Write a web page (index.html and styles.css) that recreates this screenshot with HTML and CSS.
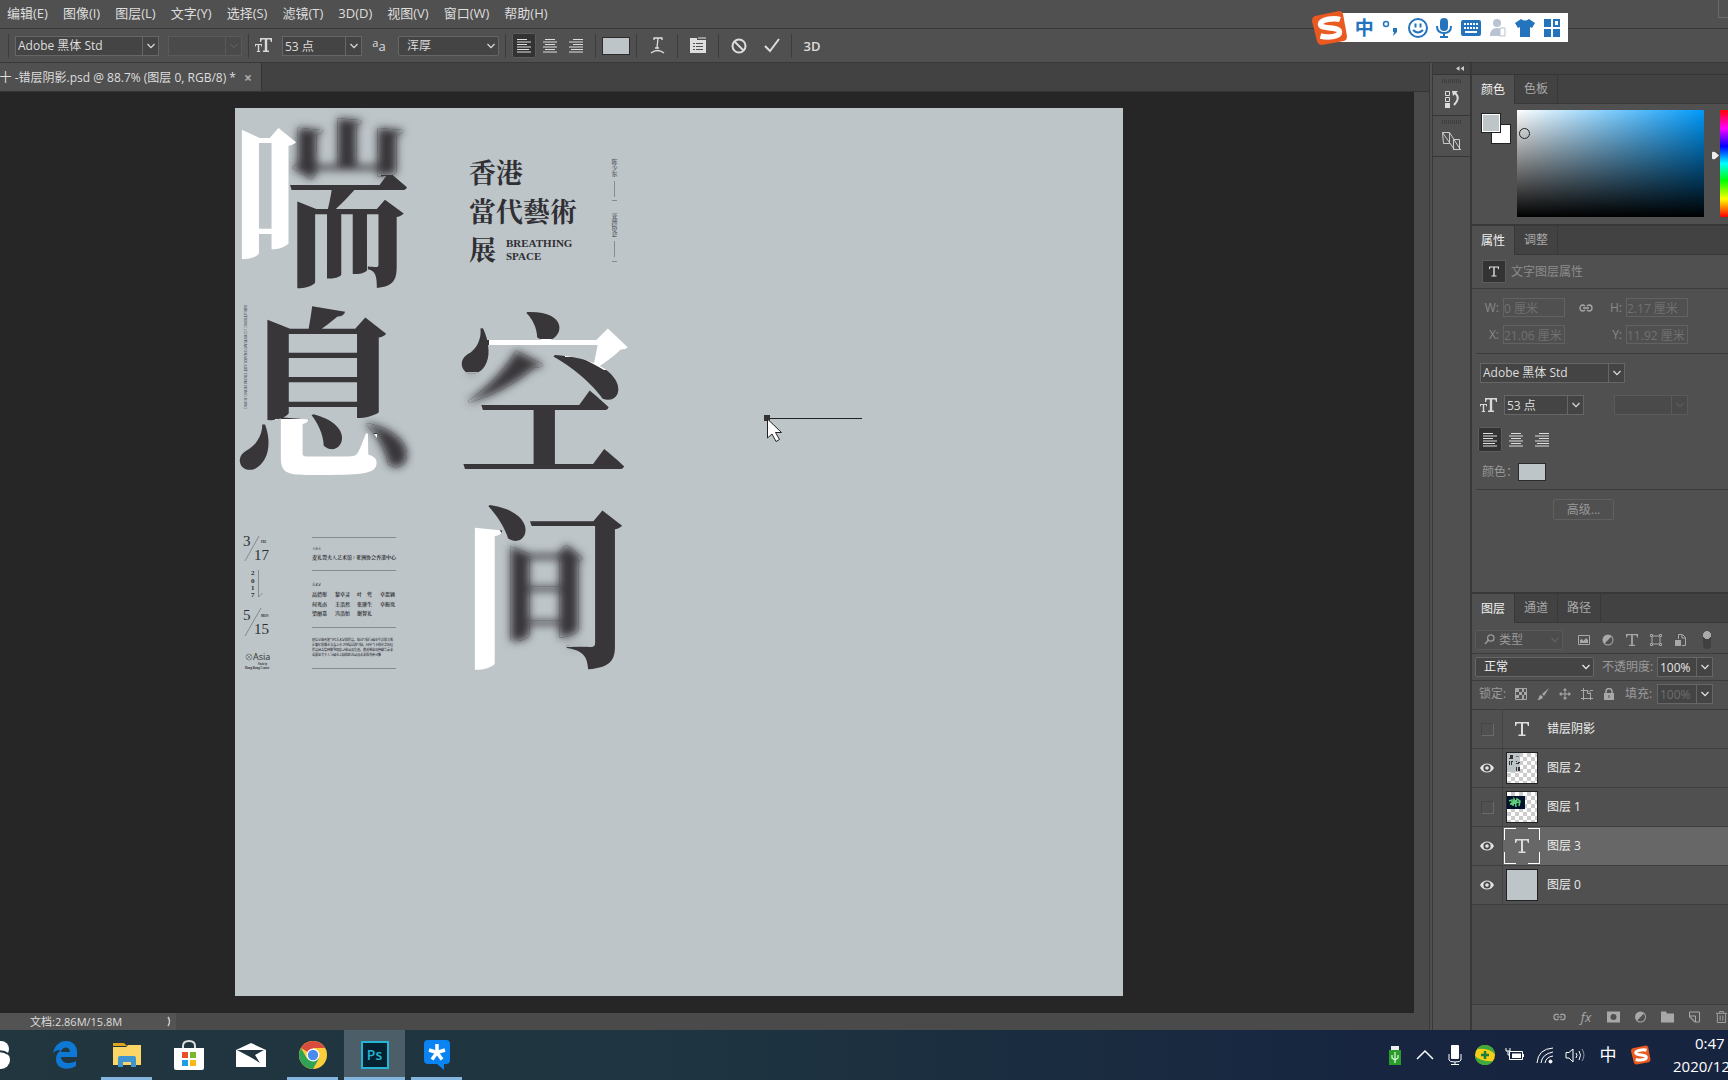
FILE: index.html
```html
<!DOCTYPE html>
<html lang="zh-CN">
<head>
<meta charset="utf-8">
<title>错层阴影.psd</title>
<link rel="stylesheet" href="styles.css">
</head>
<body>
<svg class="defs" aria-hidden="true">
  <symbol id="chev" viewBox="0 0 8 6"><path d="M0.5 1 4 4.7 7.500 1" fill="none" stroke="currentColor" stroke-width="1.200"/></symbol>
  <symbol id="al" viewBox="0 0 14 14"><path d="M0 .5h10M0 3h14M0 5.500h10M0 8h14M0 10.500h12M0 13h14" stroke="currentColor"/></symbol>
  <symbol id="ac" viewBox="0 0 14 14"><path d="M2 .5h10M0 3h14M2 5.500h10M0 8h14M2 10.500h10M0 13h14" stroke="currentColor"/></symbol>
  <symbol id="ar" viewBox="0 0 14 14"><path d="M4 .5h10M0 3h14M4 5.500h10M0 8h14M2 10.500h12M0 13h14" stroke="currentColor"/></symbol>
  <symbol id="tt" viewBox="0 0 17 15"><path d="M5 0h12v4h-1l-.8-2.500H12.200V12.500H14V14H8v-1.500h1.800V1.500H6.800L6 4H5zM0 6h7v2.500h-.8L6 7H4.200v6H5.200v1H1.800v-1H2.800V7H1L.8 8.500H0z" fill="currentColor"/></symbol>
  <symbol id="bigt" viewBox="0 0 14 14"><path d="M0 0h14v4h-1l-1-2.500H8V12.500h2.500V14h-7v-1.500H6V1.500H2L1 4H0z" fill="currentColor"/></symbol>
  <symbol id="link" viewBox="0 0 14 8"><path d="M6 2.200C5.500 1.300 4.800 1 4 1 2.200 1 1 2.300 1 4s1.200 3 3 3c.8 0 1.500-.3 2-1.200M8 2.200C8.500 1.300 9.200 1 10 1c1.800 0 3 1.300 3 3s-1.200 3-3 3c-.8 0-1.500-.3-2-1.200M4 4h6" fill="none" stroke="currentColor" stroke-width="1.300"/></symbol>
  <symbol id="eye" viewBox="0 0 14 10"><path d="M0 5C3-1 11-1 14 5 11 11 3 11 0 5z" fill="#e4e4e4"/><circle cx="7" cy="5" r="3.600" fill="#484848"/><circle cx="7" cy="5" r="1.800" fill="#e4e4e4"/></symbol>
  <symbol id="half" viewBox="0 0 12 12"><circle cx="6" cy="6" r="5.500" fill="currentColor"/><path d="M9.200 2.800A4.500 4.500 0 0 1 2.800 9.200z" fill="#505050"/></symbol>
  <symbol id="sogou" viewBox="0 0 36 36"><path d="M3 6 27 1q3 0 4 3l4 22q0 4-3 5L10 35q-4 0-5-4L0 11q0-4 3-5z" fill="#ea5a20"/><path d="M28 9.500C22 7.500 9 9.500 8.500 14c0 6 19 2 19 8 0 5-12 6-19 4" fill="none" stroke="#fff" stroke-width="5.500"/></symbol>
</svg>

<nav class="menu">
  <a href="#">编辑(E)</a><a href="#">图像(I)</a><a href="#">图层(L)</a><a href="#">文字(Y)</a><a href="#">选择(S)</a><a href="#">滤镜(T)</a><a href="#">3D(D)</a><a href="#">视图(V)</a><a href="#">窗口(W)</a><a href="#">帮助(H)</a>
  <button class="win-min" aria-label="最小化"></button>
</nav>

<div class="options">
  <i class="sep"></i>
  <span class="combo w-font"><select aria-label="字体"><option>Adobe 黑体 Std</option></select><svg><use href="#chev"/></svg></span>
  <span class="combo w-style off"><select aria-label="字体样式" disabled><option></option></select><svg><use href="#chev"/></svg></span>
  <i class="sep"></i>
  <svg class="i-tt"><use href="#tt"/></svg>
  <span class="combo w-size"><input aria-label="字号" value="53 点"><svg><use href="#chev"/></svg></span>
  <span class="aa"><sup>a</sup>a</span>
  <span class="combo plain w-aa"><select aria-label="消除锯齿"><option>浑厚</option></select><svg><use href="#chev"/></svg></span>
  <i class="sep"></i>
  <span class="aligns">
    <button class="on" aria-label="左对齐"><svg><use href="#al"/></svg></button><button aria-label="居中"><svg><use href="#ac"/></svg></button><button aria-label="右对齐"><svg><use href="#ar"/></svg></button>
  </span>
  <i class="sep"></i>
  <button class="swatch" aria-label="文本颜色"></button>
  <i class="sep"></i>
  <button class="tool" aria-label="变形文字"><svg width="15" height="17" viewBox="0 0 15 17" fill="none" stroke="currentColor" stroke-width="1.300"><path d="M4 3V1h8v2M8 1 7 11M5 11h4M1 16q6.500-5 13 0"/></svg></button>
  <i class="sep"></i>
  <button class="tool" aria-label="面板"><svg width="16" height="17" viewBox="0 0 16 17"><path d="M0 1h7v2h9v13H0z" fill="currentColor"/><path d="M8 0h8v2H8z" fill="#999"/><path d="M3 6.500h2M6 6.500h7M3 9.500h2M6 9.500h7M3 12.500h2M6 12.500h7" stroke="#505050"/></svg></button>
  <i class="sep"></i>
  <button class="tool" aria-label="取消"><svg width="16" height="16" viewBox="0 0 16 16" fill="none" stroke="currentColor" stroke-width="2"><circle cx="8" cy="8" r="6.500"/><path d="M3.500 3.500l9 9"/></svg></button>
  <button class="tool last" aria-label="提交"><svg width="16" height="15" viewBox="0 0 16 15" fill="none" stroke="currentColor" stroke-width="2"><path d="M1 8l5 5L15 1"/></svg></button>
  <i class="sep"></i>
  <button class="tool three">3D</button>
</div>

<main class="work">
  <section class="doc">
    <div class="tabs"><button class="doc-tab">十 -错层阴影.psd @ 88.7% (图层 0, RGB/8) * <b>×</b></button></div>
    <div class="stage">
      <div class="pasteboard">
        <svg class="art" viewBox="0 0 888 888" role="img" aria-label="喘息空间">
          <defs>
            <!-- two-tone fills: dark ink with the white strokes picked out -->
            <pattern id="p1" patternUnits="userSpaceOnUse" width="888" height="888"><path d="M0 0h888v888H0z" fill="#39363a"/><path d="M0 0H62V45H55V66H54V200H0z" fill="#fff"/></pattern>
            <pattern id="p2" patternUnits="userSpaceOnUse" width="888" height="888"><path d="M0 0h888v888H0z" fill="#39363a"/><path d="M40 311H73V344H108V320H133V326H142V380H40z" fill="#fff"/></pattern>
            <pattern id="p3" patternUnits="userSpaceOnUse" width="888" height="888"><path d="M0 0h888v888H0z" fill="#39363a"/><path d="M254 228H294V231H327V215H400V262H369L362 258 345 249H330V240H254z" fill="#fff"/></pattern>
            <pattern id="p4" patternUnits="userSpaceOnUse" width="888" height="888"><path d="M0 0h888v888H0z" fill="#39363a"/><path d="M230 414H260L267 426V570H230z" fill="#fff"/></pattern>
            <!-- each filter blurs a few boxes of the character and keeps the rest sharp -->
            <filter id="f1" filterUnits="userSpaceOnUse" x="0" y="0" width="200" height="200" color-interpolation-filters="sRGB">
              <feOffset in="SourceGraphic" x="62" y="0" width="138" height="67" result="a"/>
              <feOffset in="SourceGraphic" x="55" y="45" width="91" height="29" result="b"/>
              <feMerge x="0" y="0" width="200" height="200" result="m"><feMergeNode in="a"/><feMergeNode in="b"/></feMerge>
              <feComposite in="SourceGraphic" in2="m" operator="out" result="rest"/>
              <feGaussianBlur in="m" stdDeviation="4" result="s"/>
              <feMerge><feMergeNode in="s"/><feMergeNode in="rest"/></feMerge>
            </filter>
            <filter id="f2" filterUnits="userSpaceOnUse" x="0" y="180" width="200" height="200" color-interpolation-filters="sRGB">
              <feOffset in="SourceGraphic" x="130" y="313" width="60" height="12" result="a"/>
              <feOffset in="SourceGraphic" x="142" y="325" width="50" height="48" result="b"/>
              <feMerge x="0" y="180" width="200" height="200" result="m"><feMergeNode in="a"/><feMergeNode in="b"/></feMerge>
              <feComposite in="SourceGraphic" in2="m" operator="out" result="rest"/>
              <feGaussianBlur in="m" stdDeviation="4" result="s"/>
              <feMerge><feMergeNode in="s"/><feMergeNode in="rest"/></feMerge>
            </filter>
            <filter id="f3" filterUnits="userSpaceOnUse" x="210" y="180" width="200" height="200" color-interpolation-filters="sRGB">
              <feOffset in="SourceGraphic" x="254" y="240" width="62" height="24" result="a"/>
              <feOffset in="SourceGraphic" x="225" y="264" width="91" height="31" result="b"/>
              <feMerge x="210" y="180" width="200" height="200" result="m"><feMergeNode in="a"/><feMergeNode in="b"/></feMerge>
              <feComposite in="SourceGraphic" in2="m" operator="out" result="rest"/>
              <feGaussianBlur in="m" stdDeviation="4" result="s"/>
              <feMerge><feMergeNode in="s"/><feMergeNode in="rest"/></feMerge>
            </filter>
            <filter id="f4" filterUnits="userSpaceOnUse" x="210" y="380" width="200" height="200" color-interpolation-filters="sRGB">
              <feOffset in="SourceGraphic" x="269" y="433" width="88" height="106" result="a"/>
              <feMerge x="210" y="380" width="200" height="200" result="m"><feMergeNode in="a"/></feMerge>
              <feComposite in="SourceGraphic" in2="m" operator="out" result="rest"/>
              <feGaussianBlur in="m" stdDeviation="4" result="s"/>
              <feMerge><feMergeNode in="s"/><feMergeNode in="rest"/></feMerge>
            </filter>
          </defs>
          <text class="c180" fill="url(#p1)" filter="url(#f1)" x="-5" y="163">喘</text>
          <text class="c184" fill="url(#p2)" filter="url(#f2)" x="-4" y="356">息</text>
          <text class="c176" fill="url(#p3)" filter="url(#f3)" x="221" y="355">空</text>
          <text class="c174" fill="url(#p4)" filter="url(#f4)" x="223" y="546">间</text>
          <g class="serif">
            <g class="t27"><text x="234" y="75">香港</text><text x="234" y="114">當代藝術</text><text x="234" y="152">展</text></g>
            <g class="t11"><text x="271" y="139">BREATHING</text><text x="271" y="152">SPACE</text></g>
            <g class="t6 vert"><text x="379" y="51">陈少东</text><text x="379" y="105">亚洲协会</text></g>
            <text class="t4 vert" x="10" y="197">BREATHING | CONTEMPORARY ART FROM HONG KONG</text>
            <g class="t15"><text x="8" y="438">3</text><text x="19" y="452">17</text><text x="8" y="512">5</text><text x="19" y="526">15</text></g>
            <g class="t7"><text x="16" y="467">2</text><text x="16" y="475">0</text><text x="16" y="482">1</text><text x="16" y="489">7</text></g>
            <g class="t3"><text x="26" y="435">FRI</text><text x="26" y="509">MON</text><text x="77" y="442">主办方</text><text x="77" y="478">艺术家</text></g>
            <g class="t5"><text x="77" y="451">麦礼贺夫人艺术馆 / 亚洲协会香港中心</text>
              <text x="77" y="488">高倩彤</text><text x="100" y="488">黎卓灵</text><text x="122" y="488">叶　莺</text><text x="145" y="488">卓思颖</text>
              <text x="77" y="498">何兆南</text><text x="100" y="498">王浩然</text><text x="122" y="498">张康生</text><text x="145" y="498">卓振岚</text>
              <text x="77" y="507">梁丽嘉</text><text x="100" y="507">冯浩恒</text><text x="122" y="507">谢智礼</text></g>
            <g class="t3"><text x="77" y="533">展览呈现香港当代艺术家的作品，探讨空间与城市生活的关系</text><text x="77" y="538">在繁忙的都市节奏之中寻找喘息的空间，回应当下的社会环境</text><text x="77" y="543">作品涵盖绘画雕塑摄影录像以及装置，邀请观众放慢脚步前来</text><text x="77" y="548">重新思考个人与城市之间的距离以及未来的各种可能</text></g>
            <g class="asia"><text x="18" y="552">Asia</text></g>
            <g class="t3"><text x="23" y="557">Society</text><text x="10" y="561">Hong Kong Center</text></g>
          </g>
          <g fill="none" stroke="#6d7276" stroke-width=".7">
            <path d="M77 429.500h84M77 462.500h84M77 519.500h84M77 560.500h84"/>
            <path d="M24 428 10 453M26 500 10 528M23.500 462v27l4-4"/>
            <path d="M379.500 73v16M379.500 133v16M377 92.500h5M377 153.500h5"/>
            <circle cx="14" cy="549" r="3"/><path d="M12 547l4 4M12 551l4-4"/>
          </g>
          <path d="M532 310.500h95" stroke="#222"/><path d="M529 307h6v6h-6z" fill="#333"/>
          <path d="M532.500 311v19l4.500-4 4 7.500 3.500-2-4-7h6z" fill="#fff" stroke="#222"/>
        </svg>
      </div>
      <div class="vscroll"></div>
    </div>
    <div class="status"><span>文档:2.86M/15.8M<svg width="5" height="11" viewBox="0 0 5 11"><path d="M1 1q3 4.500 0 9" fill="none" stroke="#ccc" stroke-width="1.500"/></svg></span></div>
  </section>

  <aside class="rail">
    <div class="strip"><svg width="8" height="5" viewBox="0 0 8 5"><path d="M3.500 0v5L0 2.500zM8 0v5L4.500 2.500z" fill="#ccc"/></svg></div>
    <button aria-label="历史记录"><i class="grip"></i><svg width="16" height="18" viewBox="0 0 16 18" fill="none" stroke="#ddd"><path d="M1.500 1.500h4v4h-4zM1.500 7.500h4v4h-4z"/><path d="M1 13h5v5H1zM8 1h6L9 6z" fill="#ddd" stroke="none"/><path d="M11 3q6 5-1 12" stroke-width="2"/></svg></button>
    <button aria-label="字符"><i class="grip"></i><svg width="21" height="20" viewBox="0 0 21 20" fill="none" stroke="#ccc"><path d="M1.500 1.500h7v11h-6zM1.500 1.500 13 18M8.500 1.500 19 18M12.500 8.500h6v10h-6zM12 18.500h8"/></svg></button>
  </aside>

  <aside class="panels">
    <div class="strip"></div>
    <section class="p-color">
      <div class="ptabs"><button class="on">颜色</button><button>色板</button></div>
      <div class="color-body">
        <div class="fgbg"><i></i><i></i></div>
        <div class="field"><i></i></div>
        <div class="hue"><svg width="7" height="9" viewBox="0 0 7 9"><path d="M0 2q0-2 3-1l4 3.500L3 8Q0 9 0 7z" fill="#eee"/></svg><i></i></div>
      </div>
    </section>

    <section class="p-props">
      <div class="ptabs"><button class="on">属性</button><button>调整</button></div>
      <div class="ptitle"><span class="tbox"><svg><use href="#bigt"/></svg></span>文字图层属性</div>
      <div class="dims">
        <label for="w">W:</label><input id="w" disabled value="0 厘米"><svg><use href="#link"/></svg><label for="h">H:</label><input id="h" disabled value="2.17 厘米">
        <label for="x">X:</label><input id="x" disabled value="21.06 厘米"><span></span><label for="y">Y:</label><input id="y" disabled value="11.92 厘米">
      </div>
      <div class="type">
        <span class="combo w-pfont"><select aria-label="字体"><option>Adobe 黑体 Std</option></select><svg><use href="#chev"/></svg></span>
        <div class="size-row"><svg class="i-tt"><use href="#tt"/></svg><span class="combo w-psize"><input aria-label="字号" value="53 点"><svg><use href="#chev"/></svg></span><span class="combo w-pstyle off"><select aria-label="样式" disabled><option></option></select><svg><use href="#chev"/></svg></span></div>
        <span class="aligns">
          <button class="on" aria-label="左对齐"><svg><use href="#al"/></svg></button><button aria-label="居中"><svg><use href="#ac"/></svg></button><button aria-label="右对齐"><svg><use href="#ar"/></svg></button>
        </span>
        <div class="col-row">颜色：<button class="swatch" aria-label="颜色"></button></div>
      </div>
      <button class="adv">高级...</button>
    </section>

    <section class="p-layers">
      <div class="ptabs"><button class="on">图层</button><button>通道</button><button>路径</button></div>
      <div class="lrow filter">
        <span class="combo plain w-kind"><svg class="mag" viewBox="0 0 11 11"><path d="M1 10l3.500-4" stroke="currentColor" stroke-width="1.500"/><circle cx="6.800" cy="4" r="3.200" fill="none" stroke="currentColor" stroke-width="1.300"/></svg><select aria-label="类型"><option>类型</option></select><svg><use href="#chev"/></svg></span>
        <span class="icons">
          <svg viewBox="0 0 12 12"><path d="M.5 1.500h11v9H.5z" fill="none" stroke="currentColor"/><path d="M2 9V6l2-1 1.500 2L8 4l2 2v3z" fill="currentColor"/></svg>
          <svg><use href="#half"/></svg>
          <svg><use href="#bigt"/></svg>
          <svg viewBox="0 0 12 12" fill="none" stroke="currentColor"><path d="M2 3v6M10 3v6M3 2h6M3 10h6"/><path d="M.5.5h2v2h-2zM9.500.5h2v2h-2zM.5 9.500h2v2h-2zM9.500 9.500h2v2h-2z"/></svg>
          <svg viewBox="0 0 12 12"><path d="M4.500 5V.5h4l3 3v8H8M8 1v3h3" fill="none" stroke="currentColor"/><path d="M1 6h6v6H1z" fill="currentColor"/></svg>
        </span>
        <i class="toggle"></i>
      </div>
      <div class="lrow">
        <span class="combo plain w-mode"><select aria-label="混合模式"><option>正常</option></select><svg><use href="#chev"/></svg></span>
        <label for="op">不透明度:</label><span class="combo w-pct"><input id="op" value="100%"><svg><use href="#chev"/></svg></span>
      </div>
      <div class="lrow lock">
        <span class="lk">锁定:</span>
        <span class="icons">
          <svg viewBox="0 0 12 12"><path d="M.5.5h11v11H.5z" fill="none" stroke="currentColor"/><path d="M1 1h3v3H1zM7 1h2v3H7zM4 4h3v3H4zM9 4h2v3H9zM1 7h3v3H1zM7 7h2v4H7z" fill="currentColor"/></svg>
          <svg viewBox="0 0 12 12"><path d="M12 0 7 8 5 6zM4 7l2 2q-1 3-6 3 2-1 2-3 .5-2 2-2z" fill="currentColor"/></svg>
          <svg viewBox="0 0 12 12"><path d="M6 0l2.200 2.500H3.800zM6 12l2.200-2.500H3.800zM0 6l2.500-2.200v4.400zM12 6 9.500 3.800v4.400z" fill="currentColor"/><path d="M6 2v8M2 6h8" stroke="currentColor"/></svg>
          <svg viewBox="0 0 12 12" fill="none" stroke="currentColor"><path d="M2.500 0v12M0 2.500h7l2.500 2.500v7M0 10.500h12M9 2.500h3M6.500 3v2.500h3"/></svg>
          <svg viewBox="0 0 12 12"><path d="M1 5h10v7H1z" fill="currentColor"/><path d="M3 5V3.500a3 3 0 0 1 6 0V5" fill="none" stroke="currentColor" stroke-width="1.500"/><path d="M5.500 7h1v3h-1z" fill="#505050"/></svg>
        </span>
        <label for="fill">填充:</label><span class="combo w-pct dim"><input id="fill" value="100%" disabled><svg><use href="#chev"/></svg></span>
      </div>
      <ul class="layers">
        <li><span class="vis"><i></i></span><span class="thumb none"><svg><use href="#bigt"/></svg></span>错层阴影</li>
        <li><span class="vis"><svg><use href="#eye"/></svg></span><span class="thumb check"><svg viewBox="0 0 30 30"><path d="M0 0h13v19H0z" fill="#bdc4c8"/><path d="M3 2h3v3H3zM2 5h4v1H2zM2 8h1v4H2zM4 8h2v1H5v3H4zM9 8h1v1H9zM11 9h2v1h-2zM9 10h3v1H9zM9 14h1v4H9zM11 14h2v4h-2z" fill="#333"/><path d="M9 3h3v1H9z" fill="#777"/></svg></span>图层 2</li>
        <li><span class="vis"><i></i></span><span class="thumb check"><svg viewBox="0 0 30 30"><path d="M0 4h18v13H0z" fill="#03122c"/><path d="M2 9l3-1v5M6 14l1-7 2 4 1-4 3 2-1 5M3 12l9-2M8 8l1 7" stroke="#5fd07a" stroke-width="1.500" fill="none"/></svg></span>图层 1</li>
        <li class="sel"><span class="vis"><svg><use href="#eye"/></svg></span><span class="thumb none framed"><svg><use href="#bigt"/></svg></span>图层 3</li>
        <li><span class="vis"><svg><use href="#eye"/></svg></span><span class="thumb solid"></span>图层 0</li>
      </ul>
      <div class="lfoot">
        <button aria-label="链接"><svg viewBox="0 0 14 8"><use href="#link"/></svg></button>
        <button class="fx">fx</button>
        <button aria-label="蒙版"><svg viewBox="0 0 13 11"><path d="M0 0h13v11H0z" fill="currentColor"/><circle cx="6.500" cy="5.500" r="3" fill="#505050"/></svg></button>
        <button aria-label="调整图层"><svg><use href="#half"/></svg></button>
        <button aria-label="新建组"><svg viewBox="0 0 13 11"><path d="M0 0h5l1 2h7v9H0z" fill="currentColor"/></svg></button>
        <button aria-label="新建图层"><svg viewBox="0 0 12 12" fill="none" stroke="currentColor"><path d="M1 5V1h10v10H7zM1 5h6v6H6L1 6z"/></svg></button>
        <button aria-label="删除"><svg viewBox="0 0 12 13" fill="none" stroke="currentColor"><path d="M0 2.500h12M4 2V.5h4V2M1.500 3v9.500h9V3M4.500 5v5.500M7.500 5v5.500"/></svg></button>
      </div>
    </section>
  </aside>
</main>

<footer class="taskbar">
  <div class="apps">
    <button class="cut" aria-label="应用"><svg width="24" height="28" viewBox="0 0 24 28"><circle cx="14" cy="8" r="8" fill="#fff"/><circle cx="14" cy="19" r="9" fill="#fff"/><path d="M6 11q10-2 15 2" stroke="#21343f" stroke-width="2" fill="none"/></svg></button>
    <button aria-label="Edge"><svg width="26" height="28" viewBox="0 0 26 28"><path d="M1 12C3 3 9 0 14 0c8 0 12 6 11 14v2H9c0 6 8 8 15 4v5C15 30 4 28 4 18c0-4 2-7 5-9-4 0-6 1-8 3zm8-1h9c0-6-8-6-9 0z" fill="#0f78d4"/></svg></button>
    <button class="run" aria-label="资源管理器"><svg width="28" height="24" viewBox="0 0 28 24"><path d="M0 0h11l3 3H0z" fill="#dfa21c"/><path d="M0 4h13l2-2h13v20H0z" fill="#fbd667"/><path d="M5 24V15q0-2 2-2h14q2 0 2 2v9h-5v-5h-8v5z" fill="#3f95cf"/></svg></button>
    <button aria-label="商店"><svg width="30" height="30" viewBox="0 0 30 30"><path d="M9 9V6q0-5 6-5t6 5v3" fill="none" stroke="#ddd" stroke-width="2"/><path d="M0 8h30v20q0 2-2 2H2q-2 0-2-2z" fill="#fff"/><path d="M8 12h6v6H8z" fill="#e8502b"/><path d="M16 12h6v6h-6z" fill="#76b82a"/><path d="M8 20h6v6H8z" fill="#1f9fe0"/><path d="M16 20h6v6h-6z" fill="#fbb816"/></svg></button>
    <button aria-label="邮件"><svg width="30" height="24" viewBox="0 0 30 24"><path d="M0 7 15 0l15 7v17H0z" fill="#fff"/><path d="M1 7h27l-9 5 5 8-8-5z" fill="#21343f"/></svg></button>
    <button class="run" aria-label="Chrome"><svg width="28" height="28" viewBox="0 0 28 28"><circle cx="14" cy="14" r="14" fill="#fbcd3c"/><path d="M14 14 1.900 7A14 14 0 0 1 26.100 7H14z" fill="#d94b3c"/><path d="M1.900 7A14 14 0 0 0 14 28L20 17.500 14 20 8 17.500z" fill="#2fa254"/><circle cx="14" cy="14" r="6.500" fill="#fff"/><circle cx="14" cy="14" r="5.200" fill="#4a8bf0"/></svg></button>
    <button class="run active"><span class="ps">Ps</span></button>
    <button class="run" aria-label="应用"><svg width="26" height="30" viewBox="0 0 26 30"><path d="M4 0h18q4 0 4 4v16q0 4-4 4h-2v6l-7-6H4q-4 0-4-4V4q0-4 4-4z" fill="#0a84f2"/><path d="M13 12.500V4M13 12.500 5 10M13 12.500l8-2.500M13 12.500 8 19.500M13 12.500l5 7" stroke="#fff" stroke-width="3.500" fill="none"/></svg></button>
  </div>
  <div class="tray">
    <svg viewBox="0 0 20 20"><path d="M6 1h8v4H6z" fill="#eee"/><path d="M4 5h12v15H4z" fill="#2b9b2b"/><path d="M10 7v11M7 10v3l3 2 3-2v-3" stroke="#dfd" fill="none" stroke-width="1.200"/></svg>
    <svg viewBox="0 0 20 20"><path d="M2 14l8-8 8 8" fill="none" stroke="#fff" stroke-width="1.500"/></svg>
    <svg viewBox="0 0 20 20"><rect x="6" y="0" width="8" height="14" rx="1" fill="#fff"/><path d="M4 9v6q0 2 6 2t6-2V9M10 17v3M6 19.500h8" stroke="#fff" fill="none"/></svg>
    <svg viewBox="0 0 20 20"><circle cx="10" cy="10" r="10" fill="#f5cf1a"/><path d="M2 4A10 10 0 0 1 20 9Q14 3 2 4zM18 16A10 10 0 0 1 0 11Q6 17 18 16z" fill="#3fa93c"/><path d="M10 6v8M6 10h8" stroke="#188038" stroke-width="2.500"/></svg>
    <svg viewBox="0 0 20 20"><path d="M4.500 6.500h13v8h-13zM18.500 9v3" fill="none" stroke="#fff"/><path d="M7 8.500h9v4.500H7z" fill="#fff"/><path d="M1 3v3h4V3M3 6v4h2" stroke="#fff" fill="none"/></svg>
    <svg viewBox="0 0 20 20" fill="none" stroke="#fff"><path d="M2 18Q3 4 18 3M6 18q1-9 12-11M10 18q1-6 8-7" /><circle cx="15.500" cy="16.500" r="1.500" fill="#fff"/></svg>
    <svg viewBox="0 0 20 20" fill="none" stroke="#fff"><path d="M1 7.500h3L8 4v13l-4-4H1zM11 8q2 2 0 5M14 6q3 4 0 9"/><path d="M17 4q4 6 0 12" stroke="#8a93a5"/></svg>
    <span class="ime">中</span>
    <svg viewBox="0 0 36 36"><use href="#sogou"/></svg>
  </div>
  <div class="clock"><span>0:47</span><span>2020/12</span></div>
</footer>

<div class="imebar">
  <svg class="logo"><use href="#sogou"/></svg>
  <b>中</b>
  <svg viewBox="0 0 20 20"><circle cx="5" cy="6" r="2.500" fill="none" stroke="#2374bd" stroke-width="1.500"/><path d="M12 10h4v4l-4 4 1-4h-1z" fill="#2374bd"/></svg>
  <svg viewBox="0 0 20 20" fill="none" stroke="#2374bd" stroke-width="2"><circle cx="10" cy="10" r="9"/><path d="M7.500 5.500v4M12.500 5.500v4M5 12q5 5 10 0"/></svg>
  <svg viewBox="0 0 20 20"><rect x="6" y="0" width="8" height="13" rx="4" fill="#2374bd"/><path d="M3 8q0 7 7 7t7-7M10 15v5M6 19h8" fill="none" stroke="#2374bd" stroke-width="2"/></svg>
  <svg viewBox="0 0 20 20"><path d="M2 2h16q2 0 2 2v12q0 2-2 2H2q-2 0-2-2V4q0-2 2-2z" fill="#2374bd"/><path d="M3 6h14M3 10h14" stroke="#fff" stroke-width="2" stroke-dasharray="2 1"/><path d="M4 14h12" stroke="#fff" stroke-width="2"/></svg>
  <svg viewBox="0 0 20 20"><circle cx="9" cy="5" r="4" fill="#b9c3d2"/><path d="M2 18q0-8 7-8t7 8z" fill="#b9c3d2"/><path d="M12 10h5v8h-5z" fill="#fff" stroke="#b9c3d2"/></svg>
  <svg viewBox="0 0 20 20"><path d="M6 1q4 3 8 0l6 4-3 5-2-1v10H5V9l-2 1-3-5z" fill="#2374bd"/></svg>
  <svg viewBox="0 0 20 20" fill="#2374bd"><path d="M2 1h7v8H2zM2 11h7v8H2zM11 11h7v8h-7z"/><path d="M12 2h5v6h-5z" fill="none" stroke="#2374bd" stroke-width="2"/></svg>
</div>
</body>
</html>
```
FILE: styles.css
```css
* { box-sizing: border-box; }
body {
  margin: 0; height: 100vh; overflow: hidden; position: relative;
  display: flex; flex-direction: column;
  background: #505050; color: #dedede;
  font: 12px/16px "Open Sans", "Noto Sans CJK SC", sans-serif;
}
button, input, select { font: inherit; color: inherit; background: none; border: 0; padding: 0; margin: 0; border-radius: 0; }
select { appearance: none; }
select:disabled, input:disabled { opacity: 1; }
svg { display: block; flex: none; }
.defs { position: absolute; width: 0; height: 0; }

.menu { display: flex; gap: 15px; align-items: center; height: 29px; padding: 0 0 2px 7px; border-bottom: 1px solid #383838; font-size: 13px; }
.menu a { color: inherit; text-decoration: none; }
.win-min { margin-left: auto; align-self: flex-start; width: 10px; height: 18px; border: 1px solid #6a6a6a; border-top: 0; border-right: 0; }

.options { display: flex; align-items: center; height: 34px; padding-left: 8px; gap: 6px; border-bottom: 1px solid #383838; }
.sep { width: 1px; height: 24px; background: #3c3c3c; flex: none; }
.combo { display: flex; align-items: center; height: 20px; background: #444; border: 1px solid #666; flex: none; }
.combo select, .combo input { flex: 1; min-width: 0; height: 18px; padding: 0 0 0 2px; border-right: 1px solid #666; }
.combo svg { width: 8px; height: 6px; margin: 0 3px 0 4px; }
.combo.plain { border-radius: 2px; }
.combo.plain select { border-right: 0; padding-left: 8px; }
.combo.off { border-color: #5a5a5a; background: #4a4a4a; color: #5c5c5c; }
.combo.off select { border-color: #5a5a5a; }
.w-font { width: 144px; }
.w-style { width: 74px; margin-left: 3px; }
.w-size { width: 80px; margin-left: 4px; }
.w-aa { width: 101px; margin-left: 2px; }
.i-tt { width: 17px; height: 15px; color: #d8d8d8; }
.aa { width: 22px; text-align: center; font-size: 13px; }
.aa sup { font-size: 11px; line-height: 1px; vertical-align: 4px; }
.aligns { display: flex; gap: 2px; }
.aligns button { width: 24px; height: 25px; display: grid; place-items: center; }
.aligns svg { width: 14px; height: 14px; }
.aligns .on { background: #333; outline: 1px solid #5c5c5c; outline-offset: -1px; border-radius: 2px; }
.options .aligns { margin-right: 1px; }
.swatch { width: 28px; height: 18px; background: #bdc5c9; border: 1px solid #2c2c2c; }
.tool { width: 28px; display: grid; place-items: center; }
.tool.last { width: 26px; }
.tool.three { font-weight: 600; font-size: 13px; }

.work { flex: 1; min-height: 0; display: flex; }
.doc { flex: 1; min-width: 0; display: flex; flex-direction: column; border-right: 1px solid #383838; }
.tabs { height: 29px; background: #424242; border-bottom: 1px solid #353535; display: flex; flex: none; }
.doc-tab { width: 262px; padding: 2px 9px 0 0; background: #505050; border-right: 1px solid #333; white-space: nowrap; display: flex; align-items: center; justify-content: flex-end; gap: 8px; }
.doc-tab b { font-size: 14px; color: #aaa; }
.stage { flex: 1; min-height: 0; display: flex; }
.pasteboard { flex: 1; min-width: 0; background: #262626; padding: 16px 0 0 235px; overflow: hidden; }
.art { width: 888px; height: 888px; background: #bdc5c9; }
.vscroll { width: 15px; background: #4a4a4a; }
.status { height: 17px; flex: none; background: #4a4a4a; display: flex; }
.status span { width: 176px; padding: 0 4px 0 30px; display: flex; align-items: center; justify-content: space-between; background: #535353; font-size: 11px; }

.c180, .c184, .c176, .c174 { font-family: "Noto Serif CJK SC", "Noto Sans CJK SC", serif; font-weight: 700; }
.c180 { font-size: 180px; }
.c184 { font-size: 184px; }
.c176 { font-size: 176px; }
.c174 { font-size: 174px; }
.serif { font-family: "Liberation Serif", "Noto Serif CJK SC", "Noto Sans CJK TC", serif; fill: #302f33; }
.t27 { font-size: 27px; font-weight: 700; }
.t15 { font-size: 15px; }
.t11 { font-size: 11px; font-weight: 700; }
.t7 { font-size: 7px; font-weight: 700; }
.t6 { font-size: 6px; }
.t5 { font-size: 5px; font-weight: 700; }
.t4 { font-size: 4px; }
.t3 { font-size: 3px; font-weight: 700; }
.asia { font: 9px "Open Sans", sans-serif; }
.vert { writing-mode: vertical-rl; }

.strip { height: 12px; flex: none; background: #424242; border-bottom: 1px solid #353535; }
.rail { width: 40px; flex: none; margin-left: 2px; border: 1px solid #383838; border-width: 0 2px 0 1px; display: flex; flex-direction: column; }
.rail .strip { display: flex; justify-content: flex-end; align-items: center; padding-right: 6px; }
.rail button { height: 41px; border-bottom: 1px solid #363636; display: grid; justify-items: center; align-content: start; gap: 7px; padding-top: 4px; }
.grip { width: 19px; height: 4px; background: repeating-linear-gradient(90deg, #3e3e3e 0 1px, transparent 1px 2px); }

.panels { width: 256px; flex: none; display: flex; flex-direction: column; overflow: hidden; }
.ptabs { display: flex; height: 29px; flex: none; background: #424242; border-bottom: 1px solid #383838; }
.ptabs button { width: 43px; border-right: 1px solid #383838; color: #a8a8a8; }
.ptabs .on { background: #505050; color: #f0f0f0; height: 29px; }
.p-color { height: 151px; flex: none; border-bottom: 2px solid #383838; }
.color-body { display: flex; padding: 6px 0 0 9px; }
.fgbg { width: 36px; flex: none; display: grid; align-content: start; padding-top: 3px; }
.fgbg i { grid-area: 1 / 1; width: 20px; height: 20px; border: 1px solid #222; background: #bdc5c9; box-shadow: inset 0 0 0 1px #fff; z-index: 1; }
.fgbg i + i { margin: 11px 0 0 10px; background: #fff; z-index: 0; }
.field { width: 187px; height: 107px; flex: none; background: linear-gradient(transparent, #000), linear-gradient(90deg, #fff, #0099fa); padding: 18px 0 0 2px; }
.field i { display: block; width: 11px; height: 11px; border: 1px solid #222; border-radius: 50%; }
.hue { display: flex; align-items: center; margin-left: 8px; gap: 1px; flex: none; padding-bottom: 16px; height: 107px; }
.hue i { align-self: flex-start; width: 12px; height: 107px; flex: none; background: linear-gradient(#f00, #f0f 17%, #00f 34%, #0ff 50%, #0f0 66%, #ff0 83%, #f00); }

.p-props { height: 368px; flex: none; border-bottom: 2px solid #383838; display: flex; flex-direction: column; }
.ptitle { display: flex; align-items: center; gap: 5px; height: 34px; padding-left: 10px; border-bottom: 1px solid #3c3c3c; color: #8c8c8c; flex: none; }
.tbox { width: 24px; height: 23px; background: #333; border: 1px solid #5c5c5c; display: grid; place-items: center; color: #ddd; }
.tbox svg { width: 10px; height: 11px; }
.dims { height: 65px; flex: none; margin-left: 4px; padding-top: 9px; border-bottom: 1px solid #3c3c3c; color: #8a8a8a; display: grid; grid-template-columns: 23px 62px 33px 16px 62px; grid-auto-rows: 19px; gap: 8px 4px; align-items: center; }
.dims label { text-align: right; }
.dims input { width: 62px; height: 19px; border: 1px solid #626262; color: #707070; }
.dims svg { width: 14px; height: 8px; justify-self: center; color: #aaa; }
.type { margin-left: 4px; padding: 9px 0 8px 4px; border-bottom: 1px solid #3c3c3c; display: grid; justify-items: start; gap: 12px; }
.w-pfont { width: 145px; }
.size-row { display: flex; align-items: center; }
.w-psize { width: 80px; margin: 0 30px 0 7px; }
.w-pstyle { width: 74px; }
.type .aligns { margin-left: -2px; }
.col-row { display: flex; align-items: center; color: #999; height: 18px; margin: -1px 0 0 2px; }
.adv { width: 61px; height: 21px; margin: 9px 0 0 81px; border: 1px solid #606060; color: #999; border-radius: 2px; }

.p-layers { flex: 1; min-height: 0; display: flex; flex-direction: column; }
.lrow { height: 27px; flex: none; display: flex; align-items: center; padding-left: 3px; border-bottom: 1px solid #3c3c3c; color: #9a9a9a; }
.filter { height: 31px; padding-top: 3px; }
.w-kind { width: 88px; background: #4c4c4c; border-color: #5a5a5a; }
.w-kind .mag { width: 11px; height: 11px; margin: 0 0 0 8px; }
.combo.w-kind select { padding-left: 4px; }
.w-kind .mag + select + svg { color: #636363; }
.icons { display: flex; }
.icons svg { width: 12px; height: 12px; color: #a8a8a8; }
.filter .icons { gap: 12px; margin: 0 17px 0 15px; }
.toggle { width: 8px; height: 18px; border-radius: 4px; background: radial-gradient(circle at 4px 4px, #aaa 4px, #404040 4px); }
.w-mode { width: 119px; color: #eee; margin-right: 8px; }
.lrow label { width: 55px; }
.w-pct { width: 56px; background: #444; color: #e6e6e6; }
.dim input { color: #6e6e6e; }
.lock { height: 29px; padding-bottom: 2px; }
.lk { width: 40px; padding-left: 4px; }
.lock .icons { gap: 10px; }
.lock label { width: 32px; margin-left: 10px; }

.layers { list-style: none; margin: 0; padding: 0; flex: 1; background: #4a4a4a; }
.layers li { height: 39px; display: flex; align-items: center; border-bottom: 1px solid #3e3e3e; background: #505050; color: #ececec; }
.layers .sel { background: #676767; }
.vis { width: 31px; height: 38px; border-right: 1px solid #434343; display: grid; place-items: center; background: #505050; }
.vis svg { width: 14px; height: 10px; }
.vis i { width: 13px; height: 13px; border: 1px solid #454545; border-right-color: #6a6a6a; border-bottom-color: #6a6a6a; }
.thumb { width: 32px; height: 32px; border: 1px solid #222; margin: 0 9px 0 3px; }
.thumb svg { width: 30px; height: 30px; }
.none { border: 0; display: grid; place-items: center; color: #ddd; }
.none svg { width: 14px; height: 14px; }
.check { background: repeating-conic-gradient(#ccc 0 25%, #fff 0 50%) 0 0 / 8px 8px; }
.solid { background: #bdc5c9; }
.framed { width: 36px; height: 36px; margin: 0 7px 0 1px; background: conic-gradient(#fff 0 0) 0 0, conic-gradient(#fff 0 0) 0 0, conic-gradient(#fff 0 0) 100% 0, conic-gradient(#fff 0 0) 100% 0, conic-gradient(#fff 0 0) 0 100%, conic-gradient(#fff 0 0) 0 100%, conic-gradient(#fff 0 0) 100% 100%, conic-gradient(#fff 0 0) 100% 100%; background-size: 12px 1px, 1px 12px; background-repeat: no-repeat; }
.lfoot { height: 26px; flex: none; border-top: 1px solid #3c3c3c; display: flex; justify-content: flex-end; gap: 3px; color: #a8a8a8; margin-right: -5px; padding-bottom: 2px; }
.lfoot button { width: 24px; display: grid; place-items: center; }
.lfoot svg { width: 13px; height: 12px; }
.fx { font-style: italic; font-size: 13px; }

.taskbar { height: 50px; flex: none; display: flex; justify-content: space-between; background: linear-gradient(90deg, #21363f, #1e3440 40%, #172540 80%, #17243f); color: #fff; overflow: hidden; }
.apps { display: flex; gap: 1px; }
.apps button { width: 61px; display: grid; place-items: center; background: linear-gradient(#84b5df 0 0) center bottom / 51px 0 no-repeat; }
.apps .cut { width: 33px; justify-items: start; overflow: hidden; }
.cut svg { margin-left: -13px; }
.apps .run { background-size: 51px 3px; }
.apps .active { background-size: 61px 3px; background-color: #4c5f69; }
.ps { width: 28px; height: 28px; border: 2px solid #27b3d6; background: #04222f; color: #27b3d6; font-size: 14px; font-weight: 600; line-height: 23px; }
.tray { display: flex; align-items: center; gap: 10px; margin-left: auto; }
.tray svg { width: 20px; height: 20px; }
.ime { font-size: 17px; width: 26px; text-align: center; }
.clock { width: 77px; padding-left: 22px; display: flex; flex-direction: column; justify-content: center; font-size: 15px; line-height: 23px; }
.clock span:first-child { padding-left: 22px; }

.imebar { position: absolute; right: 160px; top: 13px; height: 29px; width: 256px; background: linear-gradient(90deg, transparent 20px, #fff 20px); display: flex; align-items: center; justify-content: space-between; padding-right: 6px; color: #2374bd; }
.imebar svg { width: 20px; height: 20px; }
.imebar .logo { width: 36px; height: 36px; }
.imebar b { font-size: 19px; }
```
